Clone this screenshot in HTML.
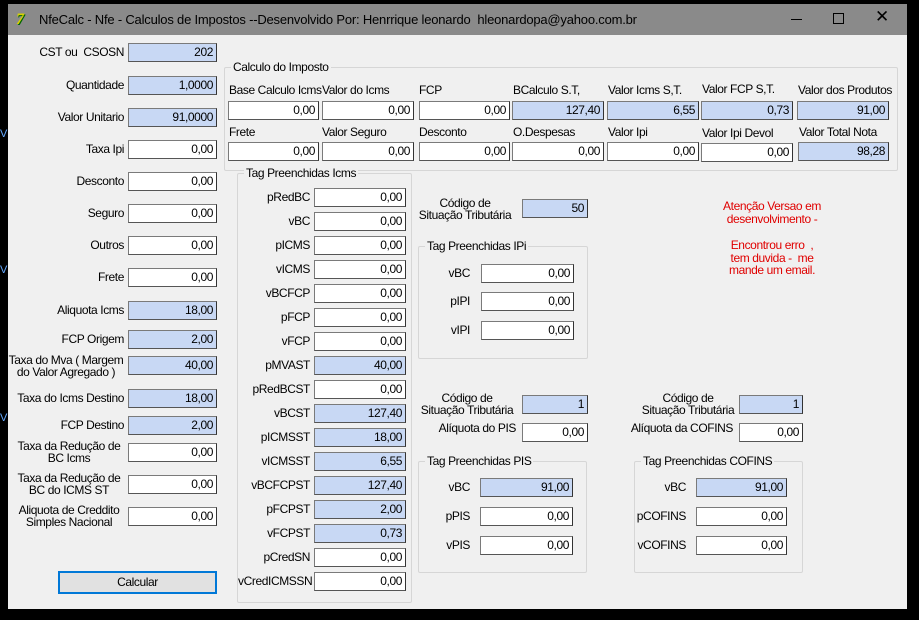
<!DOCTYPE html>
<html><head><meta charset="utf-8"><style>
*{margin:0;padding:0;box-sizing:border-box}
body{width:919px;height:620px;background:#000;position:relative;overflow:hidden;font-family:"Liberation Sans",sans-serif;font-size:12px;color:#000;letter-spacing:-0.4px}
.win{position:absolute;left:8px;top:4px;width:899px;height:605px;background:#f0f0f0}
.tb{position:absolute;left:0;top:0;width:899px;height:31px;background:#8a8a8a;color:#000}
.tt{position:absolute;left:31px;top:8px;font-size:13px;letter-spacing:-0.2px;white-space:nowrap}
.i{position:absolute;height:19px;border:1px solid #7a7a7a;background:#fff;text-align:right;padding-right:3px;line-height:17px;border-right-color:#333;border-bottom-color:#555}
.b{background:#c8d8f4}
.l{position:absolute;text-align:right;line-height:13px;white-space:nowrap}
.c{position:absolute;text-align:center;line-height:12px;white-space:nowrap}
.g{position:absolute;border:1px solid #d6d6d6;border-radius:2px}
.gt{position:absolute;top:-8px;left:6px;background:#f0f0f0;padding:0 2px;white-space:nowrap}
.t{position:absolute;line-height:13px;white-space:nowrap}
.red{position:absolute;color:#e00000;text-align:center;line-height:12.5px;width:140px;left:702px;white-space:nowrap}
</style></head><body>
<div style="position:absolute;left:0;top:128px;color:#6af;font-size:11px">V</div>
<div style="position:absolute;left:0;top:264px;color:#6af;font-size:11px">V</div>
<div style="position:absolute;left:0;top:412px;color:#6af;font-size:11px">V</div>
<div class="win" style="left:8px">
<div class="tb">
<div style="position:absolute;left:8px;top:7px;width:18px;height:17px;font:bold italic 16px 'Liberation Serif',serif;color:#d8d000;text-shadow:1px 1px 0 #060">7</div>
<div class="tt">NfeCalc - Nfe - Calculos de Impostos --Desenvolvido Por: Henrrique leonardo&nbsp; hleonardopa@yahoo.com.br</div>
<div style="position:absolute;left:783px;top:15px;width:11px;height:1px;background:#000"></div>
<div style="position:absolute;left:825px;top:9px;width:11px;height:11px;border:1px solid #000"></div>
<div style="position:absolute;left:867px;top:3px;font-size:17px">✕</div>
</div>
</div>
<div style="position:absolute;left:0;top:0">
<div class="l" style="left:8px;width:116px;top:46px">CST ou&nbsp; CSOSN</div><div class="i b" style="left:128px;top:43px;width:89px">202</div>
<div class="l" style="left:8px;width:116px;top:79px">Quantidade</div><div class="i b" style="left:128px;top:76px;width:89px">1,0000</div>
<div class="l" style="left:8px;width:116px;top:111px">Valor Unitario</div><div class="i b" style="left:128px;top:108px;width:89px">91,0000</div>
<div class="l" style="left:8px;width:116px;top:143px">Taxa Ipi</div><div class="i" style="left:128px;top:140px;width:89px">0,00</div>
<div class="l" style="left:8px;width:116px;top:175px">Desconto</div><div class="i" style="left:128px;top:172px;width:89px">0,00</div>
<div class="l" style="left:8px;width:116px;top:207px">Seguro</div><div class="i" style="left:128px;top:204px;width:89px">0,00</div>
<div class="l" style="left:8px;width:116px;top:239px">Outros</div><div class="i" style="left:128px;top:236px;width:89px">0,00</div>
<div class="l" style="left:8px;width:116px;top:271px">Frete</div><div class="i" style="left:128px;top:268px;width:89px">0,00</div>
<div class="l" style="left:8px;width:116px;top:304px">Aliquota Icms</div><div class="i b" style="left:128px;top:301px;width:89px">18,00</div>
<div class="l" style="left:8px;width:116px;top:333px">FCP Origem</div><div class="i b" style="left:128px;top:330px;width:89px">2,00</div>
<div class="c" style="left:8px;width:116px;top:354px">Taxa do Mva ( Margem<br>do Valor Agregado )</div><div class="i b" style="left:128px;top:356px;width:89px">40,00</div>
<div class="l" style="left:8px;width:116px;top:392px">Taxa do Icms Destino</div><div class="i b" style="left:128px;top:389px;width:89px">18,00</div>
<div class="l" style="left:8px;width:116px;top:419px">FCP Destino</div><div class="i b" style="left:128px;top:416px;width:89px">2,00</div>
<div class="c" style="left:14px;width:110px;top:440px">Taxa da Redução de<br>BC Icms</div><div class="i" style="left:128px;top:443px;width:89px">0,00</div>
<div class="c" style="left:14px;width:110px;top:472px">Taxa da Redução de<br>BC do ICMS ST</div><div class="i" style="left:128px;top:475px;width:89px">0,00</div>
<div class="c" style="left:14px;width:110px;top:504px">Aliquota de Creddito<br>Simples Nacional</div><div class="i" style="left:128px;top:507px;width:89px">0,00</div>
<div style="position:absolute;left:58px;top:571px;width:159px;height:23px;border:2px solid #0078d7;background:#e1e1e1;text-align:center;line-height:19px">Calcular</div>

<div class="g" style="left:224px;top:67px;width:674px;height:104px"><div class="gt">Calculo do Imposto</div></div>
<div class="t" style="left:229px;top:84px">Base Calculo Icms</div><div class="i" style="left:228px;top:101px;width:91px">0,00</div>
<div class="t" style="left:322px;top:84px">Valor do Icms</div><div class="i" style="left:322px;top:101px;width:92px">0,00</div>
<div class="t" style="left:419px;top:84px">FCP</div><div class="i" style="left:419px;top:101px;width:91px">0,00</div>
<div class="t" style="left:513px;top:84px">BCalculo S.T,</div><div class="i b" style="left:512px;top:101px;width:92px">127,40</div>
<div class="t" style="left:608px;top:84px">Valor Icms S,T.</div><div class="i b" style="left:607px;top:101px;width:92px">6,55</div>
<div class="t" style="left:702px;top:83px">Valor FCP S,T.</div><div class="i b" style="left:701px;top:101px;width:92px">0,73</div>
<div class="t" style="left:798px;top:84px">Valor dos Produtos</div><div class="i b" style="left:797px;top:101px;width:92px">91,00</div>
<div class="t" style="left:229px;top:126px">Frete</div><div class="i" style="left:228px;top:142px;width:91px">0,00</div>
<div class="t" style="left:322px;top:126px">Valor Seguro</div><div class="i" style="left:322px;top:142px;width:92px">0,00</div>
<div class="t" style="left:419px;top:126px">Desconto</div><div class="i" style="left:419px;top:142px;width:91px">0,00</div>
<div class="t" style="left:513px;top:126px">O.Despesas</div><div class="i" style="left:512px;top:142px;width:92px">0,00</div>
<div class="t" style="left:608px;top:126px">Valor Ipi</div><div class="i" style="left:607px;top:142px;width:92px">0,00</div>
<div class="t" style="left:702px;top:127px">Valor Ipi Devol</div><div class="i" style="left:701px;top:143px;width:92px">0,00</div>
<div class="t" style="left:799px;top:126px">Valor Total Nota</div><div class="i b" style="left:798px;top:142px;width:91px">98,28</div>

<div class="g" style="left:237px;top:173px;width:175px;height:430px"><div class="gt">Tag Preenchidas Icms</div></div>
<div class="l" style="left:238px;width:72px;top:191px">pRedBC</div><div class="i" style="left:314px;top:188px;width:92px">0,00</div>
<div class="l" style="left:238px;width:72px;top:215px">vBC</div><div class="i" style="left:314px;top:212px;width:92px">0,00</div>
<div class="l" style="left:238px;width:72px;top:239px">pICMS</div><div class="i" style="left:314px;top:236px;width:92px">0,00</div>
<div class="l" style="left:238px;width:72px;top:263px">vICMS</div><div class="i" style="left:314px;top:260px;width:92px">0,00</div>
<div class="l" style="left:238px;width:72px;top:287px">vBCFCP</div><div class="i" style="left:314px;top:284px;width:92px">0,00</div>
<div class="l" style="left:238px;width:72px;top:311px">pFCP</div><div class="i" style="left:314px;top:308px;width:92px">0,00</div>
<div class="l" style="left:238px;width:72px;top:335px">vFCP</div><div class="i" style="left:314px;top:332px;width:92px">0,00</div>
<div class="l" style="left:238px;width:72px;top:359px">pMVAST</div><div class="i b" style="left:314px;top:356px;width:92px">40,00</div>
<div class="l" style="left:238px;width:72px;top:383px">pRedBCST</div><div class="i" style="left:314px;top:380px;width:92px">0,00</div>
<div class="l" style="left:238px;width:72px;top:407px">vBCST</div><div class="i b" style="left:314px;top:404px;width:92px">127,40</div>
<div class="l" style="left:238px;width:72px;top:431px">pICMSST</div><div class="i b" style="left:314px;top:428px;width:92px">18,00</div>
<div class="l" style="left:238px;width:72px;top:455px">vICMSST</div><div class="i b" style="left:314px;top:452px;width:92px">6,55</div>
<div class="l" style="left:238px;width:72px;top:479px">vBCFCPST</div><div class="i b" style="left:314px;top:476px;width:92px">127,40</div>
<div class="l" style="left:238px;width:72px;top:503px">pFCPST</div><div class="i b" style="left:314px;top:500px;width:92px">2,00</div>
<div class="l" style="left:238px;width:72px;top:527px">vFCPST</div><div class="i b" style="left:314px;top:524px;width:92px">0,73</div>
<div class="l" style="left:238px;width:72px;top:551px">pCredSN</div><div class="i" style="left:314px;top:548px;width:92px">0,00</div>
<div class="l" style="left:238px;width:72px;top:575px">vCredICMSSN</div><div class="i" style="left:314px;top:572px;width:92px">0,00</div>

<div class="c" style="left:412px;width:106px;top:197px">Código de<br>Situação Tributária</div><div class="i b" style="left:522px;top:199px;width:66px">50</div>
<div class="g" style="left:418px;top:246px;width:170px;height:113px"><div class="gt">Tag Preenchidas IPi</div></div>
<div class="l" style="left:420px;width:50px;top:267px">vBC</div><div class="i" style="left:481px;top:264px;width:93px">0,00</div>
<div class="l" style="left:420px;width:50px;top:295px">pIPI</div><div class="i" style="left:481px;top:292px;width:93px">0,00</div>
<div class="l" style="left:420px;width:50px;top:324px">vIPI</div><div class="i" style="left:481px;top:321px;width:93px">0,00</div>

<div class="red" style="top:200px">Atenção Versao em<br>desenvolvimento -</div>
<div class="red" style="top:239px">Encontrou erro&nbsp; ,<br>tem duvida -&nbsp; me<br>mande um email.</div>

<div class="c" style="left:412px;width:110px;top:392px">Código de<br>Situação Tributária</div><div class="i b" style="left:522px;top:395px;width:66px">1</div>
<div class="l" style="left:412px;width:104px;top:422px">Alíquota do PIS</div><div class="i" style="left:522px;top:423px;width:66px">0,00</div>
<div class="g" style="left:418px;top:461px;width:169px;height:112px"><div class="gt">Tag Preenchidas PIS</div></div>
<div class="l" style="left:420px;width:50px;top:481px">vBC</div><div class="i b" style="left:480px;top:478px;width:93px">91,00</div>
<div class="l" style="left:420px;width:50px;top:510px">pPIS</div><div class="i" style="left:480px;top:507px;width:93px">0,00</div>
<div class="l" style="left:420px;width:50px;top:539px">vPIS</div><div class="i" style="left:480px;top:536px;width:93px">0,00</div>

<div class="c" style="left:630px;width:116px;top:392px">Código de<br>Situação Tributária</div><div class="i b" style="left:739px;top:395px;width:64px">1</div>
<div class="l" style="left:620px;width:113px;top:422px">Alíquota da COFINS</div><div class="i" style="left:739px;top:423px;width:64px">0,00</div>
<div class="g" style="left:634px;top:461px;width:169px;height:112px"><div class="gt">Tag Preenchidas COFINS</div></div>
<div class="l" style="left:636px;width:50px;top:481px">vBC</div><div class="i b" style="left:696px;top:478px;width:91px">91,00</div>
<div class="l" style="left:636px;width:50px;top:510px">pCOFINS</div><div class="i" style="left:696px;top:507px;width:91px">0,00</div>
<div class="l" style="left:636px;width:50px;top:539px">vCOFINS</div><div class="i" style="left:696px;top:536px;width:91px">0,00</div>
</div>
</body></html>
